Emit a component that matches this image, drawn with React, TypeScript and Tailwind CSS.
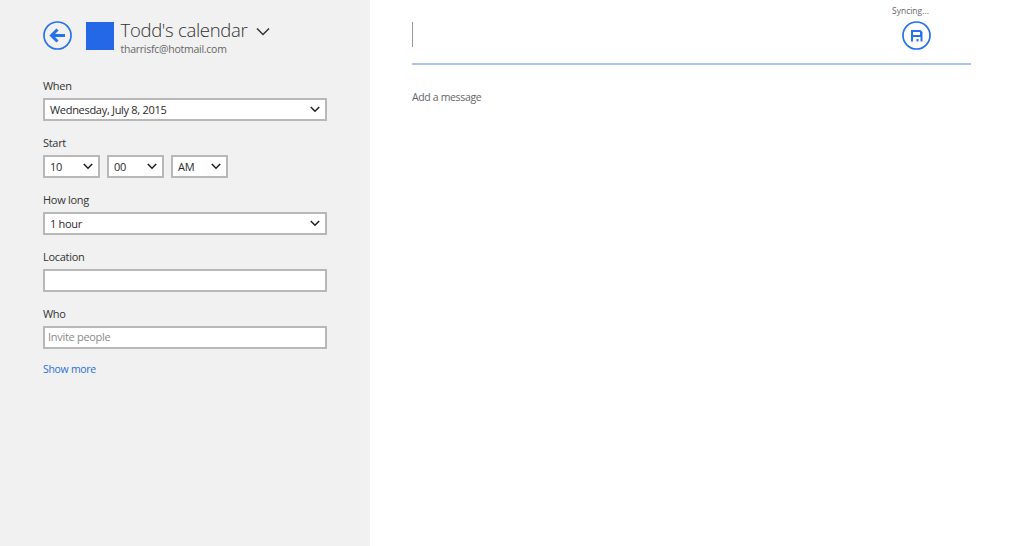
import React from "react";

const font = { fontFamily: '"Open Sans", "Noto Sans", sans-serif' };

function Chevron({ className = "" }: { className?: string }) {
  return (
    <svg width="10" height="7" viewBox="0 0 10 7" className={className} fill="none" stroke="#222" strokeWidth="1.6">
      <path d="M0.8 1 L5 5.2 L9.2 1" />
    </svg>
  );
}

function Select({ text, className }: { text: string; className: string }) {
  return (
    <div className={`h-[23px] border-2 border-[#b8b8b8] bg-white flex items-center justify-between pl-[5px] pr-[5px] text-[11px] tracking-[-0.3px] leading-none text-[#2a2a2a] ${className}`}>
      <span>{text}</span>
      <Chevron />
    </div>
  );
}

function Field({ label, children }: { label: string; children: React.ReactNode }) {
  return (
    <div className="h-[57px]">
      <div className="h-[24px] pt-[4px] text-[11px] tracking-[-0.3px] leading-[16px] text-[#333]">{label}</div>
      {children}
    </div>
  );
}

export default function App() {
  return (
    <div className="flex w-[1024px] h-[546px] overflow-hidden bg-white" style={font}>
      <aside className="w-[370px] h-full bg-[#f1f1f1] pl-[43px] pt-[18px]">
        <header className="flex h-[56px]">
          <svg width="29" height="29" viewBox="0 0 29 29" className="mt-[3px]" fill="none" stroke="#2672ec">
            <circle cx="14.5" cy="14.5" r="13.5" strokeWidth="1.7" />
            <path d="M22 14.5 H9 M14.5 8.5 L8.5 14.5 L14.5 20.5" strokeWidth="3" />
          </svg>
          <div className="w-[28px] h-[28px] bg-[#2468e8] ml-[13.5px] mt-[3.5px]" />
          <div className="ml-[7px]">
            <div className="flex items-center h-[24px]">
              <span className="text-[18.5px] font-light tracking-[-0.3px] leading-[24px] text-[#333]">Todd's calendar</span>
              <svg width="14" height="9" viewBox="0 0 14 9" className="ml-[9px] mt-[3px]" fill="none" stroke="#333" strokeWidth="1.5">
                <path d="M1 1.5 L7 7.5 L13 1.5" />
              </svg>
            </div>
            <div className="text-[10.5px] tracking-[-0.25px] leading-[14px] mt-[-0.5px] text-[#666]">tharrisfc@hotmail.com</div>
          </div>
        </header>
        <Field label="When">
          <Select text="Wednesday, July 8, 2015" className="w-[284px]" />
        </Field>
        <Field label="Start">
          <div className="flex gap-[7.5px]">
            <Select text="10" className="w-[56.5px]" />
            <Select text="00" className="w-[56.5px]" />
            <Select text="AM" className="w-[56.5px]" />
          </div>
        </Field>
        <Field label="How long">
          <Select text="1 hour" className="w-[284px]" />
        </Field>
        <Field label="Location">
          <div className="w-[284px] h-[23px] border-2 border-[#b8b8b8] bg-white" />
        </Field>
        <Field label="Who">
          <div className="w-[284px] h-[23px] border-2 border-[#b8b8b8] bg-white flex items-center pl-[3px] text-[11px] tracking-[-0.3px] text-[#8a8a8a]">Invite people</div>
        </Field>
        <div className="text-[10.5px] tracking-[-0.3px] leading-[16px] text-[#2b70e0] mt-[2px]">Show more</div>
      </aside>
      <main className="flex-1 pl-[42px] pr-[53px]">
        <div className="h-[65px] border-b-2 border-[#a9c4f2] relative flex justify-end">
          <div className="absolute left-0 top-[22px] w-px h-[25px] bg-[#999]" />
          <div className="flex flex-col items-start mr-[41px] pt-[5px] w-[38px]">
            <div className="text-[8.5px] leading-[12px] text-[#666] whitespace-nowrap">Syncing...</div>
            <svg width="29" height="29" viewBox="0 0 29 29" className="mt-[4px] ml-[9.5px]" fill="none">
              <circle cx="14.5" cy="14.5" r="13.5" stroke="#2672ec" strokeWidth="1.7" />
              <path fillRule="evenodd" fill="#2672ec" d="M9 9 H18.5 L20.5 11 V20.5 H9 Z M11 11 V14 H18 V11 Z M11 16 V20.5 H18.5 V16 Z" />
              <rect x="14.5" y="18" width="2" height="2.5" fill="#2672ec" />
            </svg>
          </div>
        </div>
        <div className="mt-[24px] text-[10.5px] tracking-[-0.35px] leading-[16px] text-[#666]">Add a message</div>
      </main>
    </div>
  );
}
